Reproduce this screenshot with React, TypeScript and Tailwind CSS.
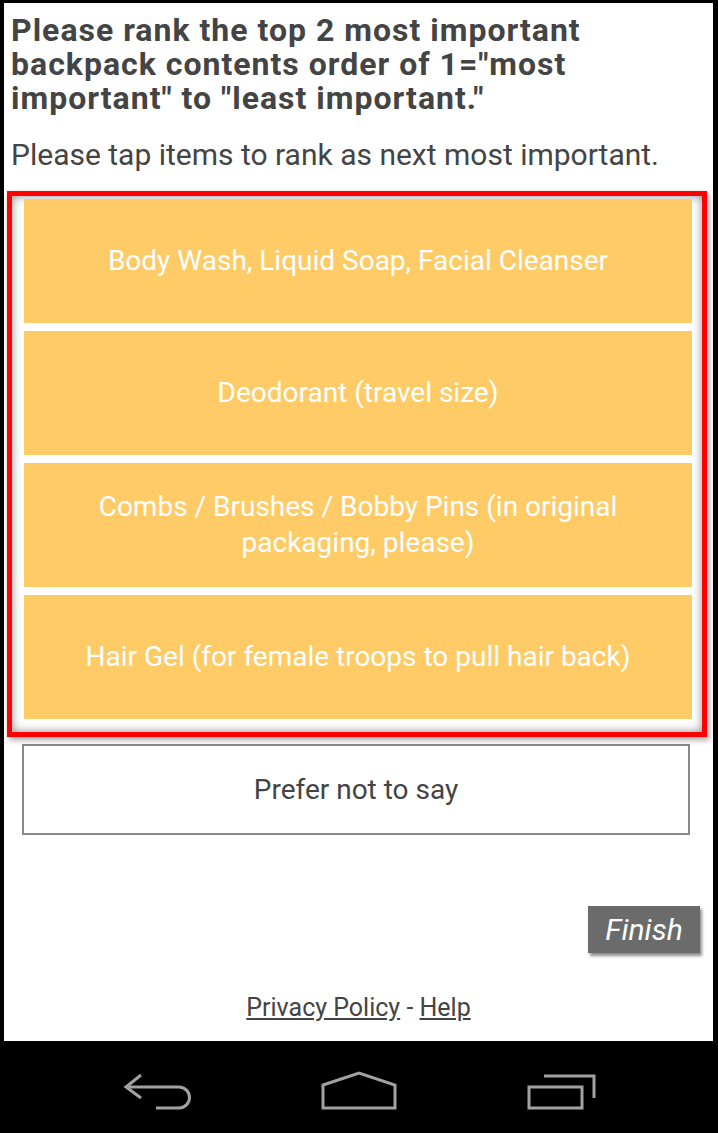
import React from 'react';

const items: string[] = [
  'Body Wash, Liquid Soap, Facial Cleanser',
  'Deodorant (travel size)',
  'Combs / Brushes / Bobby Pins (in original packaging, please)',
  'Hair Gel (for female troops to pull hair back)',
];

const NavBar: React.FC = () => (
  <div className="h-[92px] bg-black flex justify-center">
    {/* Back */}
    <svg width="200" height="92" viewBox="0 0 200 92" fill="none" stroke="#a2a2a2" strokeWidth={3}>
      <path d="M82 34 L67 46 L82 57" strokeLinejoin="miter" />
      <path d="M67 46 L120 46 A10.5 10.5 0 0 1 120 67 L97 67" />
    </svg>
    {/* Home */}
    <svg width="200" height="92" viewBox="0 0 200 92" fill="none" stroke="#a2a2a2" strokeWidth={3}>
      <path d="M64 44 L100 32 L136 44 L136 67 L64 67 Z" />
    </svg>
    {/* Recent apps */}
    <svg width="200" height="92" viewBox="0 0 200 92" fill="none" stroke="#a2a2a2" strokeWidth={3}>
      <rect x="70" y="46" width="53" height="21" />
      <path d="M85 35 L135 35 L135 57" />
    </svg>
  </div>
);

export default function App() {
  return (
    <div className="w-[718px] h-[1133px] bg-black flex flex-col overflow-hidden font-['Roboto',sans-serif]">
      <div className="flex-1 bg-white border-black border-l-[4px] border-r-[5px] border-t-[3px] flex flex-col">
        {/* Question */}
        <h1 className="pt-[10px] pl-[7px] pr-[10px] text-[32px] leading-[34px] tracking-[1px] font-bold text-[#444]">
          Please rank the top 2 most important backpack contents order of 1="most important" to "least important."
        </h1>
        <p className="mt-[23px] pl-[7px] text-[30px] leading-[34px] text-[#444]">
          Please tap items to rank as next most important.
        </p>

        {/* Ranking list */}
        <div className="mt-[19px] ml-[3px] w-[700px] border-[5px] border-[#ff0000] pt-[3px] pl-[12px] pr-[10px] pb-[13px] flex flex-col gap-[8px] shadow-[inset_0_0_10px_rgba(0,0,0,0.45),2px_3px_6px_rgba(0,0,0,0.35)]">
          {items.map((item) => (
            <button
              key={item}
              className="h-[124px] bg-[#fecb67] text-white text-[28px] leading-[36px] px-10 flex items-center justify-center text-center"
            >
              {item}
            </button>
          ))}
        </div>

        <button className="mt-[7px] ml-[18px] w-[668px] h-[91px] border-2 border-[#888] text-[28px] text-[#444] flex items-center justify-center">
          Prefer not to say
        </button>

        <div className="mt-[71px] flex justify-end pr-[13px]">
          <button className="w-[112px] h-[47px] bg-[#6b6b6b] text-white italic text-[30px] leading-[47px] shadow-[2px_3px_3px_rgba(0,0,0,0.45)]">
            Finish
          </button>
        </div>

        <div className="mt-[41px] text-center text-[25px] leading-[28px] text-[#444]">
          <a className="underline">Privacy Policy</a> - <a className="underline">Help</a>
        </div>
      </div>
      <NavBar />
    </div>
  );
}
